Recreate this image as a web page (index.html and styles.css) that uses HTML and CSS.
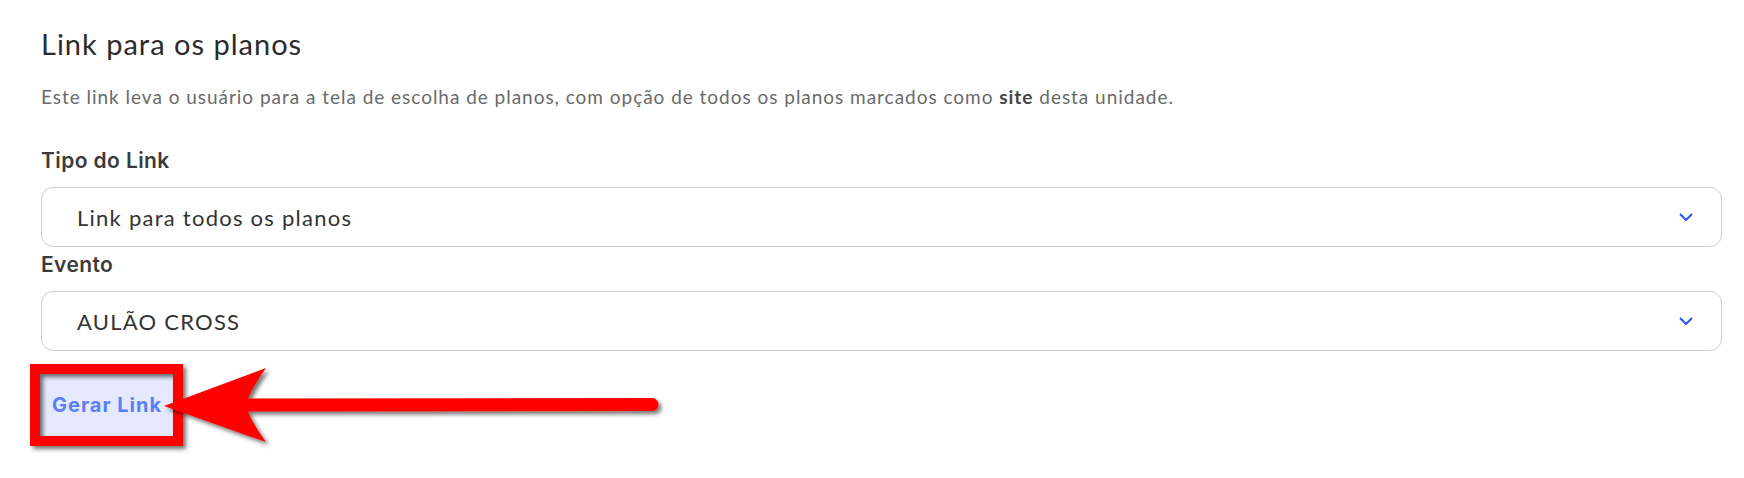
FILE: index.html
```html
<!DOCTYPE html>
<html lang="pt-BR">
<head>
<meta charset="utf-8">
<title>Link para os planos</title>
<link rel="stylesheet" href="styles.css">
</head>
<body>
<main class="page">
  <h2 class="title">Link para os planos</h2>
  <p class="desc">Este link leva o usuário para a tela de escolha de planos, com opção de todos os planos marcados como <b>site</b> desta unidade.</p>

  <div class="field">
    <label class="label">Tipo do Link</label>
    <div class="select">
      <span class="select-text">Link para todos os planos</span>
      <svg class="chev" width="14" height="8" viewBox="0 0 14 8"><polyline points="1,1 7,7 13,1" fill="none" stroke="#2457f5" stroke-width="2"/></svg>
    </div>
  </div>

  <div class="field">
    <label class="label">Evento</label>
    <div class="select">
      <span class="select-text">AULÃO CROSS</span>
      <svg class="chev" width="14" height="8" viewBox="0 0 14 8"><polyline points="1,1 7,7 13,1" fill="none" stroke="#2457f5" stroke-width="2"/></svg>
    </div>
  </div>

  <div class="actions">
    <button class="btn">Gerar Link</button>
  </div>

  <svg class="annot" width="1744" height="478" viewBox="0 0 1744 478">
    <defs>
      <filter id="sh" x="-20%" y="-50%" width="140%" height="200%">
        <feDropShadow dx="3" dy="3" stdDeviation="2" flood-color="#000" flood-opacity="0.55"/>
      </filter>
    </defs>
    <g filter="url(#sh)">
      <rect x="35" y="369" width="143" height="72" fill="none" stroke="#ff0000" stroke-width="10"/>
    </g>
    <g filter="url(#sh)">
      <line x1="246" y1="405" x2="652" y2="404.5" stroke="#ff0000" stroke-width="13" stroke-linecap="round"/>
      <path d="M164,406 L266,368 Q249,392 246,405 Q249,419 266,442 Z" fill="#ff0000"/>
    </g>
  </svg>
</main>
</body>
</html>
```

FILE: styles.css
```css
* { box-sizing: border-box; }
html, body { margin: 0; padding: 0; background: #ffffff; }
.page {
  position: relative;
  width: 1744px;
  height: 478px;
  padding: 26px 22px 0 41px;
  font-family: "Lato", "Noto Sans", sans-serif;
  overflow: hidden;
}
.title {
  margin: 0;
  font-size: 29px;
  line-height: 36px;
  font-weight: 400;
  letter-spacing: 1px;
  color: #2b2b2b;
}
.desc {
  margin: 22px 0 0;
  font-size: 19px;
  line-height: 26px;
  letter-spacing: 0.97px;
  color: #6a6a6a;
}
.desc b { color: #444; font-weight: 700; }
.field { display: flex; flex-direction: column; }
.label {
  font-family: "Inter", "Noto Sans", sans-serif;
  font-weight: 600;
  font-size: 21px;
  line-height: 28px;
  letter-spacing: 0.4px;
  color: #3b3b3b;
  margin-top: 37px;
  margin-bottom: 12px;
}
.field + .field .label { margin-top: 4px; }
.select {
  height: 60px;
  border: 1px solid #cfcfcf;
  border-radius: 12px;
  display: flex;
  align-items: center;
  justify-content: space-between;
  padding: 0 28px 0 35px;
}
.select-text {
  font-size: 22px;
  letter-spacing: 1.25px;
  color: #333;
}
.chev { display: block; }
.actions { margin-top: 21px; }
.btn {
  display: block;
  width: 140px;
  height: 66px;
  margin-left: -3px;
  border: 0;
  border-radius: 4px;
  background: #e4e9fd;
  color: #5a7ff6;
  font-family: "Inter", "Noto Sans", sans-serif;
  font-weight: 700;
  font-size: 20px;
  letter-spacing: 1px;
  text-align: left;
  padding: 0 0 0 14px;
}
.annot {
  position: absolute;
  left: 0;
  top: 0;
  pointer-events: none;
}
```
